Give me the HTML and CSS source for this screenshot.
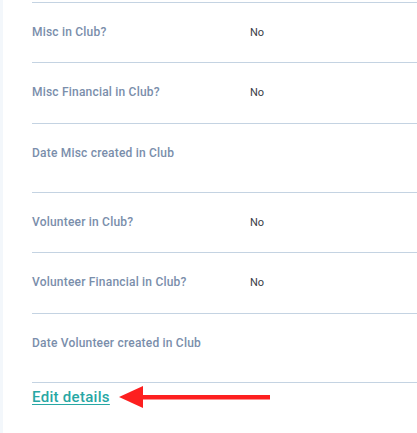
FILE: index.html
```html
<!DOCTYPE html>
<html>
<head>
<meta charset="utf-8">
<link rel="stylesheet" href="styles.css">
</head>
<body>
<div class="page">
  <div class="strip"></div>
  <div class="content">
    <div class="list">
      <div class="row"><span class="label">Misc in Club?</span><span class="value">No</span></div>
      <div class="row mid"><span class="label">Misc Financial in Club?</span><span class="value">No</span></div>
      <div class="row tall"><span class="label">Date Misc created in Club</span><span class="value"></span></div>
      <div class="row"><span class="label">Volunteer in Club?</span><span class="value">No</span></div>
      <div class="row mid"><span class="label">Volunteer Financial in Club?</span><span class="value">No</span></div>
      <div class="row tall"><span class="label">Date Volunteer created in Club</span><span class="value"></span></div>
    </div>
    <div class="actions">
      <a class="edit" href="#">Edit details</a>
      <svg class="arrow" width="152" height="24" viewBox="0 0 152 24">
        <polygon points="0,12 24,1 24,23" fill="#fd1f1f"/>
        <rect x="20" y="10" width="131" height="4.5" fill="#fd1f1f"/>
      </svg>
    </div>
  </div>
</div>
</body>
</html>
```
FILE: styles.css
```css
html, body {
  margin: 0;
  padding: 0;
  background: #ffffff;
}
body {
  font-family: Roboto, "Liberation Sans", sans-serif;
}
.page {
  display: flex;
  min-height: 433px;
}
.strip {
  width: 3px;
  background: #f3f7fb;
  flex: none;
}
.content {
  flex: 1;
  padding-left: 29px;
  padding-top: 2px;
}
.row {
  display: flex;
  align-items: center;
  border-top: 1px solid #c4d3e2;
  padding: 20px 0 21px;
  height: 18px;
  line-height: 18px;
}
.row.mid {
  padding-bottom: 22px;
}
.row.tall {
  padding-bottom: 30px;
}
.row:last-child {
  border-bottom: 1px solid #c4d3e2;
}
.label {
  width: 218px;
  font-size: 12px;
  font-weight: 500;
  letter-spacing: 0.2px;
  color: #7a8eab;
}
.value {
  font-size: 11px;
  font-weight: 400;
  color: #3a3d46;
  position: relative;
  top: 1px;
}
.actions {
  display: flex;
  align-items: center;
  gap: 9px;
  margin-top: 2px;
}
.edit {
  font-size: 15px;
  font-weight: 500;
  letter-spacing: 0.3px;
  line-height: 22px;
  color: #27a7a4;
  text-decoration: underline;
  text-underline-offset: 2px;
}
.arrow {
  display: block;
}
```
